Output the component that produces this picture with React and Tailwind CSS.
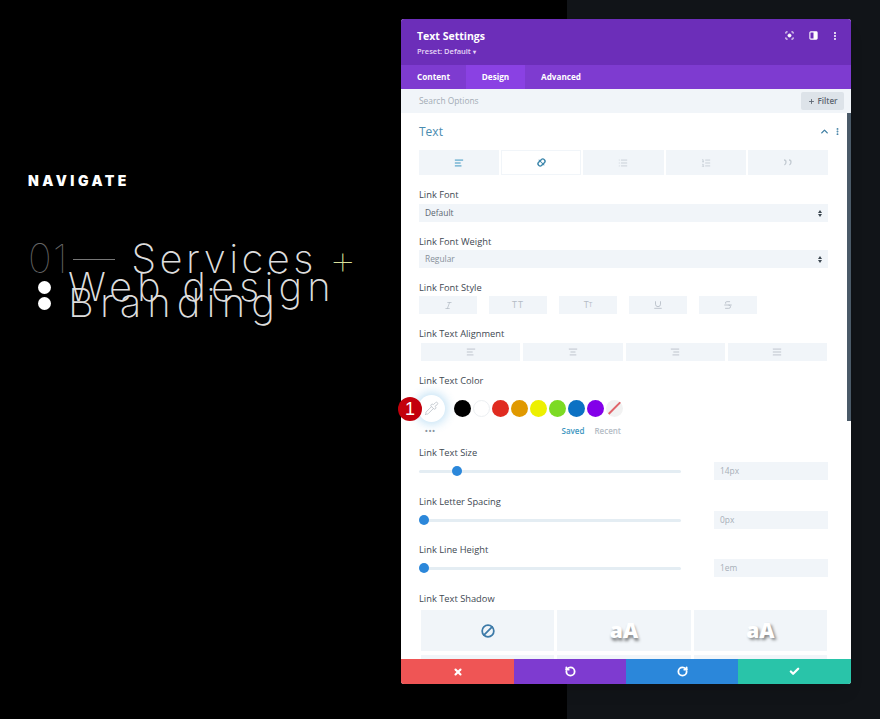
import React from "react";
import { MoreVertical, ChevronUp, Plus, X, RotateCcw, RotateCw, Check, Ban, Italic, Underline, Strikethrough, AlignLeft, AlignCenter, AlignRight, AlignJustify, List, ListOrdered, Pipette } from "lucide-react";

function Label({ children, className }) {
  return <div className={"h-4 pt-[2px] flex items-center text-[9.3px] font-medium text-[#3e4852] leading-4 " + className}>{children}</div>;
}

function Select({ text, dark, className }) {
  return (
    <div className={"h-[18px] mr-[23px] bg-[#f1f5f9] flex items-center justify-between pl-[6px] pr-[6px] text-[8.4px] font-medium " + (dark ? "text-[#5b6570] " : "text-[#87909a] ") + className}>
      <span>{text}</span>
      <span className="flex flex-col gap-[1px]">
        <span className="w-0 h-0 border-x-[2.5px] border-x-transparent border-b-[3px] border-b-[#3c4650]"></span>
        <span className="w-0 h-0 border-x-[2.5px] border-x-transparent border-t-[3px] border-t-[#3c4650]"></span>
      </span>
    </div>
  );
}

function Slider({ offset, text, className }) {
  return (
    <div className={"h-[18px] mr-[23px] flex items-center justify-between " + className}>
      <div className="w-[262px] h-[3px] bg-[#e4edf3] rounded-full flex items-center">
        <span className="size-[10px] rounded-full bg-[#2b87da]" style={{ marginLeft: offset }}></span>
      </div>
      <div className="w-[114px] h-[18px] bg-[#f1f5f9] flex items-center pl-[6px] text-[8.4px] font-medium text-[#a7afb8]">{text}</div>
    </div>
  );
}

function Swatch({ color, extra }) {
  return <span className={"size-[17px] rounded-full " + (extra || "")} style={{ background: color }}></span>;
}

function ShadowCell({ children }) {
  return <div className="bg-[#f1f5f9] h-[41px] flex items-center justify-center">{children}</div>;
}

export default function App() {
  return (
    <div className="relative w-[880px] h-[719px] overflow-hidden flex bg-[#111418] font-['Open_Sans',sans-serif]">
      <div className="w-[567px] h-full bg-black pt-[171px] pl-7 font-['Inter',sans-serif] text-white">
        <div className="h-5 leading-5 text-[14px] font-black tracking-[3.5px]">NAVIGATE</div>
        <div className="mt-[49px] h-[38px] flex items-center text-[40px] font-extralight leading-[38px]">
          <span className="text-[#666] font-thin tracking-[1px]">01</span>
          <span className="w-[42px] h-px bg-[#777] ml-[5px]"></span>
          <span className="ml-[16px] text-[#ddd] tracking-[3.4px]">Services</span>
          <span className="ml-[12px] text-[#d8e09a] font-thin text-[44px]">+</span>
        </div>
        <ul className="mt-[1px] pl-[10px] text-[40px] font-extralight text-[#ddd]">
          <li className="h-4 leading-4 flex items-center gap-[17px] tracking-[5.1px]"><span className="size-[13px] rounded-full bg-white shrink-0"></span><span>Web design</span></li>
          <li className="h-4 leading-4 flex items-center gap-[17px] tracking-[6.1px]"><span className="size-[13px] rounded-full bg-white shrink-0"></span><span>Branding</span></li>
        </ul>
      </div>

      <div className="absolute left-[401px] top-[19px] w-[450px] h-[665px] flex flex-col bg-white rounded-[3px] overflow-hidden shadow-lg">
        <div className="h-[46px] bg-[#6c2eb9] flex justify-between pl-4 pr-[11px] text-white">
          <div className="pt-[9px]">
            <div className="text-[10.5px] font-bold leading-4">Text Settings</div>
            <div className="text-[7.5px] font-semibold leading-3 mt-[1px] text-[#e6d8f7]">Preset: Default <span className="text-[6px]">▾</span></div>
          </div>
          <div className="flex items-start pt-[12px]">
            <svg width="9" height="9" viewBox="0 0 10 10" fill="none" stroke="white" strokeWidth="1"><path d="M1 3V1h2M7 1h2v2M9 7v2H7M3 9H1V7" /><circle cx="5" cy="5" r="1.7" fill="white" /></svg>
            <svg width="9" height="9" viewBox="0 0 10 10" className="ml-[15px]"><rect x="1" y="1" width="8" height="8" rx="1" fill="none" stroke="white" strokeWidth="1.2" /><rect x="5" y="1" width="4" height="8" fill="white" /></svg>
            <MoreVertical size={10} strokeWidth={3} className="ml-[12px]" />
          </div>
        </div>
        <div className="h-6 bg-[#7e3bd0] flex text-white text-[8.2px] font-bold">
          <div className="w-[65px] pl-4 flex items-center">Content</div>
          <div className="w-[59px] bg-[#8a41e3] flex items-center justify-center">Design</div>
          <div className="pl-4 flex items-center">Advanced</div>
        </div>
        <div className="h-6 bg-[#f1f5f9] flex items-center justify-between pl-[18px] pr-[7px] text-[8.4px]">
          <span className="text-[#a3acb5] pt-px">Search Options</span>
          <div className="w-[43px] h-[18px] bg-[#dde3e9] flex items-center justify-center gap-[3px] text-[#5b6570] text-[8px] font-semibold rounded-[2px]"><Plus size={7} strokeWidth={3} />Filter</div>
        </div>

        <div className="relative flex-1 overflow-hidden pl-[18px]">
          <div className="absolute right-0 top-0 w-1 h-[308px] bg-[#4a5a68]"></div>
          <div className="h-[37px] flex items-center justify-between pr-[9px]">
            <span className="text-[12px] text-[#4a8cb0] leading-none">Text</span>
            <div className="flex items-center gap-[3px] text-[#3e7ea3]">
              <ChevronUp size={11} strokeWidth={3} />
              <MoreVertical size={9} strokeWidth={3} />
            </div>
          </div>
          <div className="grid grid-cols-5 gap-[2px] mr-[23px] h-[25px]">
            <div className="bg-[#f1f5f9] flex items-center justify-center text-[#3d96c1]"><AlignLeft size={10} strokeWidth={2.4} /></div>
            <div className="bg-white border border-[#f1f5f9] flex items-center justify-center">
              <svg width="11" height="11" viewBox="0 0 12 12" fill="none" stroke="#3c86ab" strokeWidth="1.5"><rect x="1.6" y="3.6" width="8.8" height="4.8" rx="2.4" transform="rotate(-45 6 6)" /><path d="M3 3 9 9" strokeWidth="1.1" /></svg>
            </div>
            <div className="bg-[#f1f5f9] flex items-center justify-center text-[#c2cad2]"><List size={10} /></div>
            <div className="bg-[#f1f5f9] flex items-center justify-center text-[#c2cad2]"><ListOrdered size={10} /></div>
            <div className="bg-[#f1f5f9] flex items-center justify-center">
              <svg width="9" height="7" viewBox="0 0 9 7" fill="none" stroke="#c2cad2" strokeWidth="1.3"><path d="M1 1c1.5 0 2 1 2 2s-.6 2.4-1.6 3M6 1c1.5 0 2 1 2 2s-.6 2.4-1.6 3" /></svg>
            </div>
          </div>

          <Label className="mt-[11px]">Link Font</Label>
          <Select text="Default" dark className="mt-[2px]" />
          <Label className="mt-[11px]">Link Font Weight</Label>
          <Select text="Regular" className="mt-[1px]" />
          <Label className="mt-[11px]">Link Font Style</Label>
          <div className="mt-[1px] flex gap-3 text-[#b4bcc5]">
            <div className="w-[58px] h-[18px] bg-[#f1f5f9] flex items-center justify-center"><Italic size={9} /></div>
            <div className="w-[58px] h-[18px] bg-[#f1f5f9] flex items-center justify-center text-[9px] font-medium tracking-[1px]">TT</div>
            <div className="w-[58px] h-[18px] bg-[#f1f5f9] flex items-center justify-center text-[9px] font-medium">T<span className="text-[6.5px]">T</span></div>
            <div className="w-[58px] h-[18px] bg-[#f1f5f9] flex items-center justify-center"><Underline size={10} /></div>
            <div className="w-[58px] h-[18px] bg-[#f1f5f9] flex items-center justify-center"><Strikethrough size={10} /></div>
          </div>
          <Label className="mt-[11px]">Link Text Alignment</Label>
          <div className="mt-[2px] ml-[2px] mr-[24px] grid grid-cols-4 gap-[3px] text-[#b4bcc5]">
            <div className="h-[18px] bg-[#f1f5f9] flex items-center justify-center"><AlignLeft size={10} /></div>
            <div className="h-[18px] bg-[#f1f5f9] flex items-center justify-center"><AlignCenter size={10} /></div>
            <div className="h-[18px] bg-[#f1f5f9] flex items-center justify-center"><AlignRight size={10} /></div>
            <div className="h-[18px] bg-[#f1f5f9] flex items-center justify-center"><AlignJustify size={10} /></div>
          </div>
          <Label className="mt-[11px]">Link Text Color</Label>
          <div className="mt-[6px] h-[28px] flex items-center">
            <div className="size-[27px] -ml-[1px] rounded-full bg-white shadow-[0_0_8px_3px_rgba(80,170,225,0.3)] flex items-center justify-center text-[#bfc5cb]"><Pipette size={15} strokeWidth={1.4} /></div>
            <div className="ml-[9px] flex items-center gap-[2px]">
              <Swatch color="#000000" />
              <Swatch color="#ffffff" extra="border border-[#eceff2]" />
              <Swatch color="#e02b20" />
              <Swatch color="#e09900" />
              <Swatch color="#edf000" />
              <Swatch color="#7cda24" />
              <Swatch color="#0c71c3" />
              <Swatch color="#8300e9" />
              <span className="size-[17px] rounded-full bg-[#f2f2f2] overflow-hidden flex items-center justify-center"><span className="w-[20px] h-[1.5px] bg-[#e0646a] -rotate-45"></span></span>
            </div>
          </div>
          <div className="mt-px h-4 flex items-center justify-between mr-[230px] text-[8px] font-semibold">
            <span className="ml-[6px] text-[#8a949e] tracking-[1px] text-[7px] font-bold leading-none">•••</span>
            <span className="flex gap-[10px]"><span className="text-[#3d96c1]">Saved</span><span className="text-[#b4bcc5]">Recent</span></span>
          </div>
          <Label className="mt-[5px]">Link Text Size</Label>
          <Slider offset={33} text="14px" className="mt-[2px]" />
          <Label className="mt-[13px]">Link Letter Spacing</Label>
          <Slider offset={0} text="0px" className="mt-[2px]" />
          <Label className="mt-3">Link Line Height</Label>
          <Slider offset={0} text="1em" className="mt-[2px]" />
          <Label className="mt-[13px]">Link Text Shadow</Label>
          <div className="mt-1 ml-[2px] mr-[24px] grid grid-cols-3 gap-x-[3px] gap-y-1">
            <ShadowCell><Ban size={14} strokeWidth={3} className="text-[#3d7aa8] -scale-x-100" /></ShadowCell>
            <ShadowCell><span className="text-[21px] font-extrabold text-white [text-shadow:1px_3px_3px_rgba(0,0,0,0.45)]">aA</span></ShadowCell>
            <ShadowCell><span className="text-[21px] font-extrabold text-white [text-shadow:2px_2px_3px_rgba(0,0,0,0.45)]">aA</span></ShadowCell>
            <ShadowCell />
            <ShadowCell />
            <ShadowCell />
          </div>
        </div>

        <div className="h-[25px] shrink-0 flex text-white">
          <div className="w-[113px] bg-[#ef5555] flex items-center justify-center"><X size={10} strokeWidth={5} /></div>
          <div className="w-[112px] bg-[#7e3bd0] flex items-center justify-center"><RotateCcw size={11} strokeWidth={4} /></div>
          <div className="w-[112px] bg-[#2b87da] flex items-center justify-center"><RotateCw size={11} strokeWidth={4} /></div>
          <div className="w-[113px] bg-[#29c4a9] flex items-center justify-center"><Check size={11} strokeWidth={5} /></div>
        </div>
      </div>

      <div className="absolute left-[398px] top-[397px] size-[24px] rounded-full bg-[#c3000c] text-white flex items-center justify-center text-[18px] font-['Liberation_Sans',sans-serif] leading-none">1</div>
    </div>
  );
}
